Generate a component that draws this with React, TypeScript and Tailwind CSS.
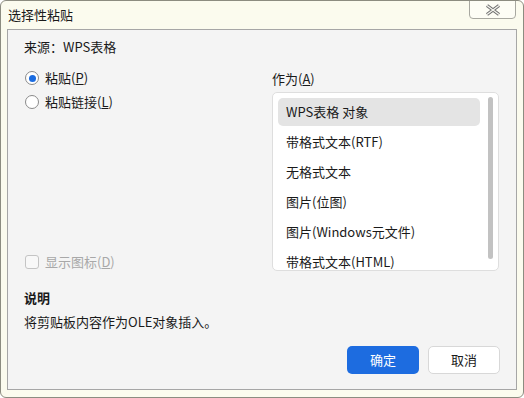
import React from "react";

const font = { fontFamily: '"Noto Sans CJK SC", "Noto Sans", sans-serif' };

function Radio({ checked }: { checked?: boolean }) {
  return (
    <span className="w-[14px] h-[14px] rounded-full border border-[#8a8a8a] bg-white flex items-center justify-center shrink-0">
      {checked && <span className="w-[7px] h-[7px] rounded-full bg-[#1a6be0]" />}
    </span>
  );
}

export default function App() {
  const items = [
    "WPS表格 对象",
    "带格式文本(RTF)",
    "无格式文本",
    "图片(位图)",
    "图片(Windows元文件)",
    "带格式文本(HTML)",
  ];
  return (
    <div
      className="w-[524px] h-[398px] bg-[#fbfbee] border border-[#8c8c80] rounded-[6px] flex flex-col text-[13px] text-[#1a1a1a] overflow-hidden"
      style={font}
    >
      <div className="h-[28px] flex items-start shrink-0">
        <div className="pl-[7px] pt-[5px] leading-[18px]">选择性粘贴</div>
        <div className="ml-auto mr-[7px] w-[47px] h-[19px] -mt-px border border-[#a8a8a0] rounded-b-[4px] bg-[#fdfdf5] flex items-center justify-center">
          <svg width="16" height="12" viewBox="0 0 16 12">
            <path d="M2 1.5 L14 10.5 M14 1.5 L2 10.5" stroke="#6e6e6e" strokeWidth="3.4" fill="none" />
            <path d="M2 1.5 L14 10.5 M14 1.5 L2 10.5" stroke="#f2f2ec" strokeWidth="1.4" fill="none" />
          </svg>
        </div>
      </div>
      <div className="mx-[6px] h-[361px] border border-[#a6a6a6] bg-[#f4f4f4] flex flex-col px-[16px]">
        <div className="mt-[8px] leading-[18px] h-[18px]">来源：WPS表格</div>
        <div className="mt-[10px] flex">
          <div className="w-[248px] flex flex-col">
            <div className="h-[24px] flex items-center gap-[6px] pl-px">
              <Radio checked />
              <span>粘贴(<span className="underline">P</span>)</span>
            </div>
            <div className="h-[24px] flex items-center gap-[6px] pl-px">
              <Radio />
              <span>粘贴链接(<span className="underline">L</span>)</span>
            </div>
            <div className="mt-auto mb-[-3px] h-[24px] flex items-center gap-[6px] pl-px text-[#a8a8a8]">
              <span className="w-[14px] h-[14px] rounded-[3px] border border-[#c4c4c4] bg-[#f8f8f8]" />
              <span>显示图标(<span className="underline">D</span>)</span>
            </div>
          </div>
          <div className="flex flex-col pt-[4px]">
            <div className="h-[18px] leading-[18px]">作为(<span className="underline">A</span>)</div>
            <div className="mt-[4px] w-[227px] h-[179px] bg-white border border-[#dedede] rounded-[5px] flex overflow-hidden pt-[5px] pl-[5px]">
              <div className="w-[202px] flex flex-col gap-[2px]">
                {items.map((t, i) => (
                  <div
                    key={t}
                    className={`h-[28px] shrink-0 flex items-center pl-[8px] rounded-[5px] ${i === 0 ? "bg-[#e4e4e4]" : ""}`}
                  >
                    {t}
                  </div>
                ))}
              </div>
              <div className="ml-[8px] mt-[-1px] w-[5px] h-[162px] rounded-full bg-[#c2c2c2]" />
            </div>
          </div>
        </div>
        <div className="mt-[18px] font-bold leading-[18px]">说明</div>
        <div className="mt-[6px] leading-[18px]">将剪贴板内容作为OLE对象插入。</div>
        <div className="mt-[15px] flex justify-end gap-[9px] pr-[0px]">
          <button className="w-[72px] h-[28px] rounded-[5px] bg-[#1d6ce0] text-white">确定</button>
          <button className="w-[72px] h-[28px] rounded-[5px] bg-white border border-[#d8d8d8]">取消</button>
        </div>
      </div>
    </div>
  );
}
